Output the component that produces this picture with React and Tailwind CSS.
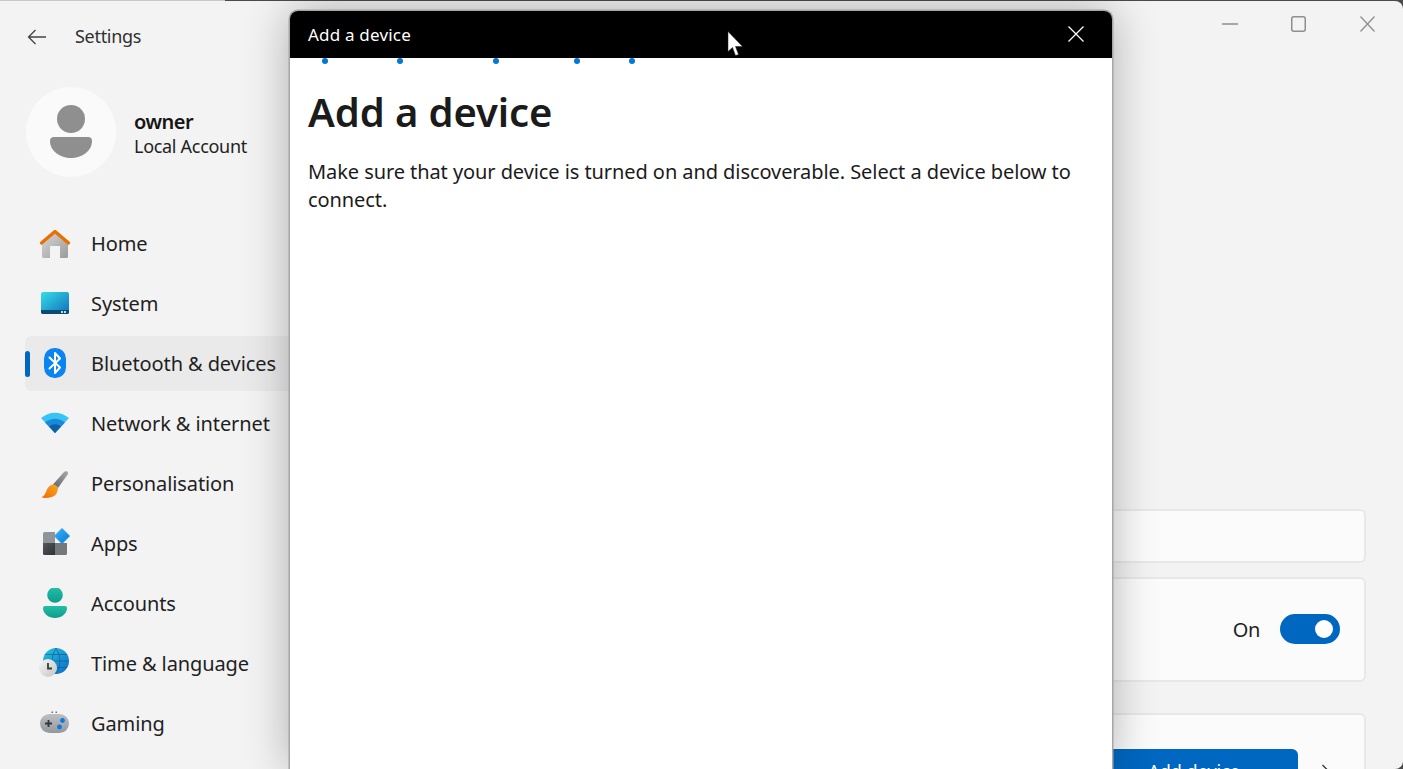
function HomeIcon() {
  return (
    <svg width="32" height="32" viewBox="0 0 32 32">
      <defs>
        <linearGradient id="homeBody" x1="0" y1="0" x2="1" y2="1">
          <stop offset="0" stopColor="#d9d9d9" />
          <stop offset="1" stopColor="#9a9a9a" />
        </linearGradient>
      </defs>
      <path d="M3 14 L16 3 L29 14 V28.500 Q29 30 27.500 30 H21 V18 H11 V30 H4.500 Q3 30 3 28.500 Z" fill="url(#homeBody)" />
      <path d="M2.500 15 L16 3.500 L29.500 15" fill="none" stroke="#e86f00" strokeWidth="3.400" strokeLinecap="round" strokeLinejoin="round" />
    </svg>
  );
}

function SystemIcon() {
  return (
    <svg width="32" height="32" viewBox="0 0 32 32">
      <defs>
        <linearGradient id="sysBody" x1="0" y1="0" x2="1" y2="1">
          <stop offset="0" stopColor="#36dde8" />
          <stop offset="1" stopColor="#0f6fbd" />
        </linearGradient>
      </defs>
      <rect x="2" y="4" width="28" height="22" rx="2" fill="url(#sysBody)" />
      <path d="M2 22 H30 V24 Q30 26 28 26 H4 Q2 26 2 24 Z" fill="#0c4a6e" />
      <rect x="22" y="23" width="2" height="2" fill="#c5dbe8" />
      <rect x="25" y="23" width="2" height="2" fill="#c5dbe8" />
    </svg>
  );
}

function BluetoothIcon() {
  return (
    <svg width="32" height="32" viewBox="0 0 32 32">
      <rect x="5" y="0" width="22" height="30" rx="10.500" fill="#0a84f0" />
      <path d="M10.500 9.500 L21 19.500 L16 25 V5 L21 10.500 L10.500 20.500" fill="none" stroke="#ffffff" strokeWidth="2" strokeLinejoin="round" strokeLinecap="round" />
    </svg>
  );
}

function WifiIcon() {
  return (
    <svg width="32" height="32" viewBox="0 0 32 32">
      <path d="M16 25 L2 10 Q16 -0.500 30 10 Z" fill="#38c3f5" />
      <path d="M16 25 L6 14.500 Q16 7 26 14.500 Z" fill="#1a8ad8" />
      <path d="M16 25 L10 18.500 Q16 14 22 18.500 Z" fill="#0f5ea8" />
    </svg>
  );
}

function BrushIcon() {
  return (
    <svg width="32" height="32" viewBox="0 0 32 32">
      <defs>
        <linearGradient id="brushHandle" x1="1" y1="0" x2="0" y2="1">
          <stop offset="0" stopColor="#a8abb0" />
          <stop offset="1" stopColor="#5f6368" />
        </linearGradient>
        <linearGradient id="brushHead" x1="1" y1="0" x2="0" y2="1">
          <stop offset="0" stopColor="#f9a825" />
          <stop offset="1" stopColor="#ef6c00" />
        </linearGradient>
      </defs>
      <path d="M27 3 Q29.500 3.500 29 6 L19 20 L14 16.500 L25 4 Z" fill="url(#brushHandle)" />
      <path d="M13.500 16.500 Q18 16.500 19 20.500 Q18.500 27 13 29 Q7 30.500 2.500 29.500 Q6 27.500 7 24 Q8.500 18 13.500 16.500 Z" fill="url(#brushHead)" />
    </svg>
  );
}

function AppsIcon() {
  return (
    <svg width="32" height="32" viewBox="0 0 32 32">
      <defs>
        <linearGradient id="appsDark" x1="0" y1="0" x2="1" y2="1">
          <stop offset="0" stopColor="#55585c" />
          <stop offset="1" stopColor="#2f3133" />
        </linearGradient>
        <linearGradient id="appsDiamond" x1="0" y1="0" x2="1" y2="1">
          <stop offset="0" stopColor="#36b4f7" />
          <stop offset="1" stopColor="#0a78d8" />
        </linearGradient>
      </defs>
      <path d="M5.500 4 H16 V15 H4 V5.500 Q4 4 5.500 4 Z" fill="#8f9499" />
      <path d="M4 15 H16 V27 H5.500 Q4 27 4 25.500 Z" fill="url(#appsDark)" />
      <path d="M16 15 H28 V25.500 Q28 27 26.500 27 H16 Z" fill="#74787c" />
      <path d="M23 0.500 L30.500 8 L23 15.500 L15.500 8 Z" fill="url(#appsDiamond)" stroke="url(#appsDiamond)" strokeLinejoin="round" />
    </svg>
  );
}

function AccountsIcon() {
  return (
    <svg width="32" height="32" viewBox="0 0 32 32">
      <defs>
        <linearGradient id="acctBody" x1="0" y1="0" x2="0" y2="1">
          <stop offset="0" stopColor="#22bfa6" />
          <stop offset="1" stopColor="#0e9c8d" />
        </linearGradient>
      </defs>
      <circle cx="16" cy="7" r="7.800" fill="url(#acctBody)" />
      <path d="M6 18 H26 Q28 18 28 20 C28 26 22 30 16 30 C10 30 4 26 4 20 Q4 18 6 18 Z" fill="url(#acctBody)" />
    </svg>
  );
}

function TimeIcon() {
  return (
    <svg width="32" height="32" viewBox="0 0 32 32">
      <defs>
        <linearGradient id="globe" x1="0" y1="0" x2="1" y2="1">
          <stop offset="0" stopColor="#29c6dc" />
          <stop offset="1" stopColor="#0b69c4" />
        </linearGradient>
        <linearGradient id="clockFace" x1="0" y1="0" x2="1" y2="1">
          <stop offset="0" stopColor="#f7f7f7" />
          <stop offset="1" stopColor="#c4c4c4" />
        </linearGradient>
      </defs>
      <circle cx="17" cy="13" r="13" fill="url(#globe)" />
      <path d="M17 0 Q9 13 17 26 M17 0 Q25 13 17 26 M4 13 H30 M6 6.500 H28 M6 19.500 H28" fill="none" stroke="#0e4f96" strokeOpacity="0.550" strokeWidth="1" />
      <circle cx="9" cy="20" r="9" fill="url(#clockFace)" />
      <path d="M9 15 V20.500 H13" fill="none" stroke="#3b3b3b" strokeWidth="1.800" />
    </svg>
  );
}

function GamingIcon() {
  return (
    <svg width="32" height="32" viewBox="0 0 32 32">
      <defs>
        <linearGradient id="pad" x1="0" y1="0" x2="0" y2="1">
          <stop offset="0" stopColor="#bcc0c4" />
          <stop offset="1" stopColor="#94989d" />
        </linearGradient>
      </defs>
      <rect x="1" y="6" width="29" height="19" rx="9.500" fill="url(#pad)" />
      <path d="M6 15.500 H13 M9.500 12 V19" stroke="#33363a" strokeWidth="1.800" />
      <circle cx="23.500" cy="12.500" r="2.400" fill="#0a78e0" />
      <circle cx="20.500" cy="19" r="2.400" fill="#0a78e0" />
      <rect x="12.500" y="3.500" width="1.500" height="1.500" fill="#6b6f73" />
      <rect x="16.500" y="3.500" width="1.500" height="1.500" fill="#6b6f73" />
    </svg>
  );
}

const navItems = [
  { label: 'Home', icon: HomeIcon },
  { label: 'System', icon: SystemIcon },
  { label: 'Bluetooth & devices', icon: BluetoothIcon, active: true },
  { label: 'Network & internet', icon: WifiIcon },
  { label: 'Personalisation', icon: BrushIcon },
  { label: 'Apps', icon: AppsIcon },
  { label: 'Accounts', icon: AccountsIcon },
  { label: 'Time & language', icon: TimeIcon },
  { label: 'Gaming', icon: GamingIcon },
];

function Sidebar() {
  return (
    <aside className="w-[330px] shrink-0 pl-[25px]">
      <div className="flex h-[71px] items-center pl-[2px]">
        <svg width="20" height="18" viewBox="0 0 20 18">
          <path d="M19 9 H1.500 M8.500 2 L1.500 9 L8.500 16" fill="none" stroke="#444444" strokeWidth="1.300" />
        </svg>
        <span className="ml-[28px] text-[18px] tracking-[-0.300px] text-[#303030]">Settings</span>
      </div>

      <div className="mt-[15px] ml-px flex items-center">
        <div className="flex h-[90px] w-[90px] shrink-0 items-center justify-center rounded-full bg-[#fafafa]">
          <svg width="44" height="54" viewBox="0 0 44 54">
            <circle cx="22" cy="14" r="14" fill="#8f8f8f" />
            <path d="M5 32 H39 Q43 32 43 36 C43 46 33 53 22 53 C11 53 1 46 1 36 Q1 32 5 32 Z" fill="#8f8f8f" />
          </svg>
        </div>
        <div className="ml-[18px] flex flex-col pt-[2px]">
          <span className="text-[20px] leading-[26px] font-semibold tracking-[-0.500px] text-[#151515]">owner</span>
          <span className="-mt-px text-[18px] leading-[24px] tracking-[-0.300px] text-[#222222]">Local Account</span>
        </div>
      </div>

      <nav className="mt-[39px] flex flex-col gap-[5px]">
        {navItems.map((item) => {
          const Icon = item.icon;
          return (
            <div
              key={item.label}
              className={`relative flex h-[55px] items-center gap-[20px] rounded-l-md pl-[14px] pt-px ${item.active ? 'bg-[#eaeaea]' : ''}`}
            >
              {item.active && (
                <span className="absolute top-[15px] left-0 h-[26px] w-[5px] rounded-full bg-[#0067c0]" />
              )}
              <Icon />
              <span className="text-[20px] tracking-[-0.100px] text-[#1f1f1f]">{item.label}</span>
            </div>
          );
        })}
      </nav>
    </aside>
  );
}

function MainPanel() {
  return (
    <main className="flex min-w-0 flex-1 flex-col pr-[37px]">
      <div className="-mr-[37px] flex h-[46px] shrink-0 items-center justify-end pr-[28px]">
        <svg width="16" height="16" viewBox="0 0 16 16">
          <path d="M0 8 H16" stroke="#8e8e8e" strokeWidth="1.500" />
        </svg>
        <svg className="ml-[53px]" width="15" height="16" viewBox="0 0 15 16">
          <rect x="0.750" y="0.750" width="13.500" height="14.500" rx="2" fill="none" stroke="#8e8e8e" strokeWidth="1.500" />
        </svg>
        <svg className="ml-[54px]" width="15" height="16" viewBox="0 0 15 16">
          <path d="M0.500 0.500 L14.500 15.500 M14.500 0.500 L0.500 15.500" stroke="#8e8e8e" strokeWidth="1.300" />
        </svg>
      </div>

      <div className="mt-[462px] h-[54px] shrink-0 rounded-md border-2 border-[#e8e8e8] bg-[#fbfbfb]" />

      <div className="mt-[14px] flex h-[105px] shrink-0 items-center justify-end gap-[20px] rounded-md border-2 border-[#e8e8e8] bg-[#fbfbfb] pr-[24px]">
        <span className="text-[20px] tracking-[-0.400px] text-[#1f1f1f]">On</span>
        <div className="-mt-px flex h-[30px] w-[60px] items-center justify-end rounded-full bg-[#0067c0] pr-[7px]">
          <span className="h-[18px] w-[18px] rounded-full bg-white" />
        </div>
      </div>

      <div className="mt-[31px] flex h-[120px] shrink-0 items-start justify-end gap-[24px] rounded-md border-2 border-[#e8e8e8] bg-[#fbfbfb] pr-[34px] pt-[34px]">
        <div className="flex h-[44px] w-[300px] items-center justify-end rounded-md bg-[#0067c0] pr-[58px] text-[18px] text-white">
          Add device
        </div>
        <svg className="mt-[15px]" width="8" height="16" viewBox="0 0 8 16">
          <path d="M0.500 1 L7.500 8 L0.500 15" fill="none" stroke="#333333" strokeWidth="1.300" />
        </svg>
      </div>
    </main>
  );
}

function AddDeviceDialog() {
  return (
    <div className="absolute top-[11px] left-[290px] h-[758px] w-[822px] rounded-t-lg bg-white shadow-[0_0_0_1.500px_#a6a6a6,0_0_45px_rgba(0,0,0,0.3)]">
      <div className="flex h-[47px] items-center justify-between rounded-t-lg bg-black pl-[18px] pr-[28px]">
        <span className="text-[17px] tracking-[0.200px] text-white">Add a device</span>
        <svg className="-mt-[2px]" width="16" height="16" viewBox="0 0 16 16">
          <path d="M0.500 0.500 L15.500 15.500 M15.500 0.500 L0.500 15.500" stroke="#ffffff" strokeWidth="1.300" />
        </svg>
      </div>

      {/* progress dots */}
      <span className="absolute top-[47px] left-[32px] h-[6px] w-[6px] rounded-full bg-[#0078d4]" />
      <span className="absolute top-[47px] left-[107px] h-[6px] w-[6px] rounded-full bg-[#0078d4]" />
      <span className="absolute top-[47px] left-[203px] h-[6px] w-[6px] rounded-full bg-[#0078d4]" />
      <span className="absolute top-[47px] left-[284px] h-[6px] w-[6px] rounded-full bg-[#0078d4]" />
      <span className="absolute top-[47px] left-[339px] h-[6px] w-[6px] rounded-full bg-[#0078d4]" />

      <div className="px-[18px] pt-[26px]">
        <h1 className="text-[40px] leading-[56px] font-semibold tracking-[-0.100px] text-[#1b1b1b]">Add a device</h1>
        <p className="mt-[18px] text-[20px] leading-[28px] tracking-[-0.075px] text-[#1b1b1b]">
          Make sure that your device is turned on and discoverable. Select a device below to connect.
        </p>
      </div>

      <svg className="absolute top-[20px] left-[437px]" width="20" height="28" viewBox="0 0 20 28">
        <path d="M1 0.500 V20.500 L5.500 16.500 L8.500 24.500 L11.500 23.500 L8.500 15.500 L15.500 15.500 Z" fill="#ffffff" stroke="#222222" strokeWidth="0.500" />
      </svg>
    </div>
  );
}

export default function App() {
  return (
    <div className="relative h-[769px] w-[1403px] overflow-hidden bg-[#4a4a4a] font-['Noto_Sans',sans-serif]">
      <div className="h-px w-[225px] bg-[#c8c8c8]" />
      <div className="flex h-[768px] rounded-tr-lg rounded-br-lg bg-[#f3f3f3]">
        <Sidebar />
        <MainPanel />
      </div>
      <AddDeviceDialog />
    </div>
  );
}
